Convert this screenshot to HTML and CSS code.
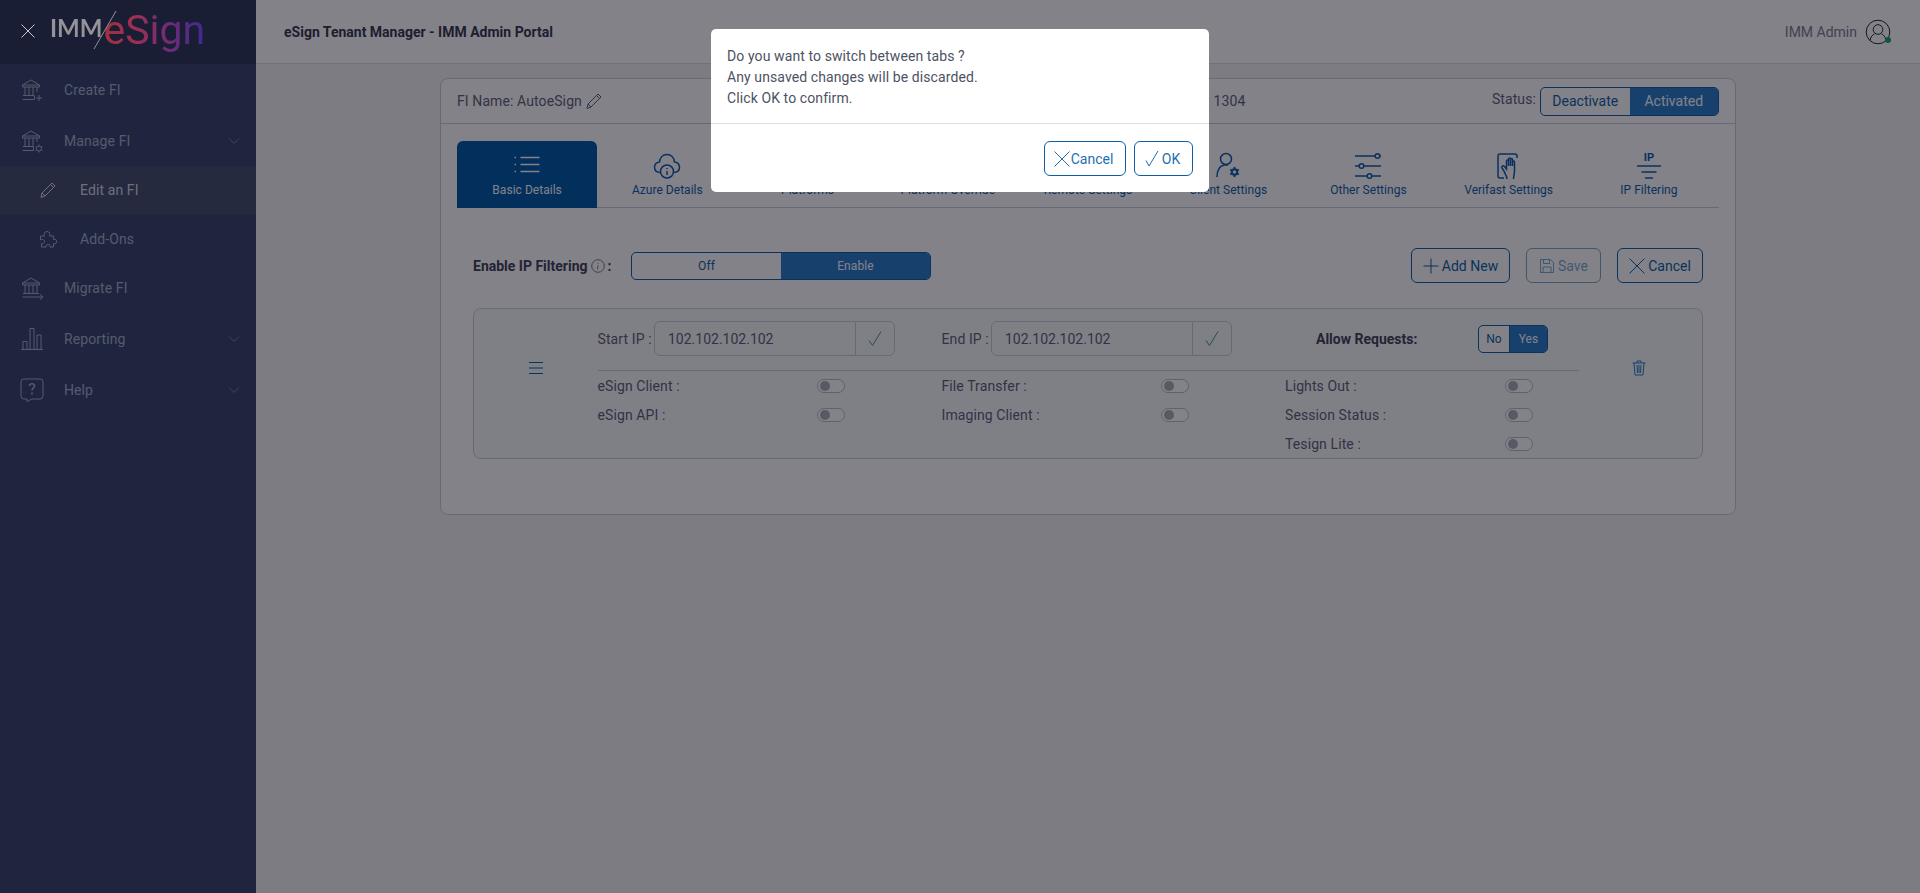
FILE: index.html
```html
<!DOCTYPE html>
<html>
<head>
<meta http-equiv="Content-Type" content="text/html; charset=utf-8"/>
<title>eSign Tenant Manager - IMM Admin Portal</title>
<link rel="stylesheet" href="styles.css">
</head>
<body>

<div class="app">
  <aside class="side">
    <div class="side-top">
      <svg class="ico close-x above" width="16" height="16" viewBox="0 0 16 16"><path d="M1.500 1.500l13 13M14.500 1.500l-13 13"/></svg>
      <div class="logo above">
        <span class="logo-imm">IMM</span>
        <svg class="logo-slash" width="24" height="38" viewBox="0 0 24 38"><path d="M23 0L1 38"/></svg>
        <span class="logo-esign">eSign</span>
      </div>
    </div>

    <nav class="menu">
      <a class="menu-item">
        <svg class="ico menu-ico" width="24" height="24" viewBox="0 0 24 24"><path d="M2.500 7L11 2l8.500 5zM2.500 7v2h17V7M5 9v8.500M9 9v8.500M13 9v8.500M17 9v5M3 17.500h11M2.500 21.500h12v-4M19 17v6M16 20h6"/></svg>
        <span>Create FI</span>
      </a>
      <a class="menu-item">
        <svg class="ico menu-ico" width="24" height="24" viewBox="0 0 24 24"><path d="M2.500 7L11 2l8.500 5zM2.500 7v2h17V7M5 9v8.500M9 9v8.500M13 9v8.500M17 9v4M3 17.500h10M2.500 21.500h11v-4"/><circle cx="19" cy="19.500" r="2.500"/><path d="M19 15.500v1.500M19 22v1.500M15.500 17.500l1.300.8M21.200 20.700l1.300.8M15.500 21.500l1.300-.8M21.200 18.300l1.300-.8"/></svg>
        <span>Manage FI</span>
        <svg class="ico chev" width="12" height="8" viewBox="0 0 12 8"><path d="M1 1.500l5 5 5-5"/></svg>
      </a>
      <div class="sub-current">
        <a class="menu-item sub">
          <svg class="ico menu-ico" width="18" height="18" viewBox="0 0 18 18"><path d="M2 16.500l1-4.500L13 2l3 3L6 15zM3 12l3 3M11.500 3.500l3 3"/></svg>
          <span>Edit an FI</span>
        </a>
      </div>
      <a class="menu-item sub addons">
        <svg class="ico menu-ico" width="18" height="18" viewBox="0 0 18 18"><path d="M1.500 6h4c-1-2 0-4.500 2.500-4.500S11.500 4 10.500 6h4v3.500c2-.8 3.500.3 3 2.500s-2 2-3 1.500V17h-3.500c.5-1.500-.5-2.500-2-2.500s-2.500 1-2 2.500H2.500v-3.500c1.500.5 3-.5 3-2s-2-3-4-1.500z"/></svg>
        <span>Add-Ons</span>
      </a>
      <a class="menu-item">
        <svg class="ico menu-ico" width="24" height="24" viewBox="0 0 24 24"><path d="M2.500 7L11 2l8.500 5zM2.500 7v2h17V7M5 9v8M9 9v8M13 9v8M17 9v8M3 17.500h16M2.500 21h20M20 18.500l3 2.500-3 2.500"/></svg>
        <span>Migrate FI</span>
      </a>
      <a class="menu-item">
        <svg class="ico menu-ico" width="24" height="24" viewBox="0 0 24 24"><path d="M1 22.500h22M3 22.500v-8h4v8M10 22.500V1.500h4v21M17 22.500V8h4v14.500"/></svg>
        <span>Reporting</span>
        <svg class="ico chev" width="12" height="8" viewBox="0 0 12 8"><path d="M1 1.500l5 5 5-5"/></svg>
      </a>
      <a class="menu-item">
        <svg class="ico menu-ico" width="24" height="24" viewBox="0 0 24 24"><path d="M4 1h16a3 3 0 0 1 3 3v14a3 3 0 0 1-3 3h-8l-5 2.500V21H4a3 3 0 0 1-3-3V4a3 3 0 0 1 3-3z"/><path class="help-mark" d="M9.500 8c0-3 5-3 5 0 0 2-2.500 2-2.500 4.500M12 14.500v2"/></svg>
        <span>Help</span>
        <svg class="ico chev" width="12" height="8" viewBox="0 0 12 8"><path d="M1 1.500l5 5 5-5"/></svg>
      </a>
    </nav>
  </aside>

  <div class="main">
    <header class="topbar">
      <div class="page-title">eSign Tenant Manager - IMM Admin Portal</div>
      <div class="user">
        <span>IMM Admin</span>
        <span class="avatar">
          <svg class="ico" width="26" height="26" viewBox="0 0 26 26"><circle cx="13" cy="13" r="11.800"/><circle cx="13" cy="10.500" r="4.800"/><path d="M5 21.500c.5-4 3-6 4.500-6.500M21 21.500c-.5-4-3-6-4.500-6.500"/></svg>
          <i class="online"></i>
        </span>
      </div>
    </header>

    <section class="card">
      <div class="card-head">
        <div class="fi-name">FI Name: AutoeSign
          <svg class="ico" width="18" height="18" viewBox="0 0 18 18"><path d="M2 16.500l1-4.500L13 2l3 3L6 15zM3 12l3 3M11.500 3.500l3 3"/></svg>
        </div>
        <div class="fi-id">FI ID: 1304</div>
        <div class="status">
          <span class="status-label">Status:</span>
          <div class="seg seg-status">
            <button class="seg-btn">Deactivate</button>
            <button class="seg-btn on">Activated</button>
          </div>
        </div>
      </div>

      <div class="tabs">
        <div class="tab active">
          <svg class="ico thick" width="30" height="30" viewBox="0 0 30 30"><path d="M8.500 6.500h19M8.500 13.500h19M8.500 20.500h19M2.500 6.500H4M2.500 13.500H4M2.500 20.500H4"/></svg>
          <span>Basic Details</span>
        </div>
        <div class="tab">
          <svg class="ico thick" width="30" height="30" viewBox="0 0 30 30"><path d="M8.500 21.500C4.500 21.500 2.500 19 2.500 16s2.500-5 5-5C8 6.500 11 3.500 15 3.500s7 3 7.500 7.500c2.500 0 5 2 5 5s-2 5.500-6 5.500"/><circle cx="15" cy="20.500" r="6.500"/><path d="M15 20v4M15 17v1"/></svg>
          <span>Azure Details</span>
        </div>
        <div class="tab"><span class="icon-gap"></span><span>Platforms</span></div>
        <div class="tab"><span class="icon-gap"></span><span>Platform Override</span></div>
        <div class="tab"><span class="icon-gap"></span><span>Remote Settings</span></div>
        <div class="tab">
          <svg class="ico thick" width="30" height="30" viewBox="0 0 30 30"><circle cx="13" cy="8" r="5.500"/><path d="M4 26c0-7 3-11 7-12h4"/><circle cx="21.500" cy="21" r="2.700" stroke-width="2"/><path d="M21.500 16v2M21.500 24v2M17.200 18.500l1.700 1M24.100 22.500l1.700 1M17.200 23.500l1.700-1M24.100 19.500l1.700-1" stroke-width="1.800"/></svg>
          <span>Client Settings</span>
        </div>
        <div class="tab">
          <svg class="ico thick" width="30" height="30" viewBox="0 0 30 30"><path d="M2 5h20M27 5h1M2 15h4M11 15h17M2 25h12M19 25h9"/><circle cx="24.500" cy="5" r="2.300"/><circle cx="8.500" cy="15" r="2.300"/><circle cx="16.500" cy="25" r="2.300"/></svg>
          <span>Other Settings</span>
        </div>
        <div class="tab">
          <svg class="ico thick" width="30" height="30" viewBox="0 0 30 30"><path d="M21 3H6a2 2 0 0 0-2 2v20a2 2 0 0 0 2 2h4M21 3a2 2 0 0 1 2 2v2M10 20l-2-3c-1-1.500 1-3 2.500-1.500l2 2.500V10c0-1.500 2-1.500 2 0v5V8c0-1.500 2-1.500 2 0v7V8.500c0-1.500 2-1.500 2 0V15v-4c0-1.500 2-1.500 2 0v9c0 3-1 5-1 8M10 20c1 3 3 5 3 8"/></svg>
          <span>Verifast Settings</span>
        </div>
        <div class="tab">
          <svg class="ico thick" width="30" height="30" viewBox="0 0 30 30"><text class="ip-glyph" x="15" y="10" text-anchor="middle">IP</text><path d="M3 15h24M7.500 21h15M11 27h8"/></svg>
          <span>IP Filtering</span>
        </div>
      </div>

      <div class="tools">
        <div class="filter-label">Enable IP Filtering
          <svg class="ico info" width="14" height="14" viewBox="0 0 14 14"><circle cx="7" cy="7" r="6.300"/><path d="M7 6.300l-.5 4M7 3.800v1"/></svg>
          <span class="colon">:</span>
        </div>
        <div class="seg seg-filter">
          <button class="seg-btn">Off</button>
          <button class="seg-btn on">Enable</button>
        </div>
        <div class="actions">
          <button class="btn btn-add">
            <svg class="ico" width="16" height="16" viewBox="0 0 16 16"><path d="M8 .500v15M.500 8h15"/></svg>Add New
          </button>
          <button class="btn btn-save">
            <svg class="ico" width="16" height="16" viewBox="0 0 16 16"><path d="M1.500 1.500h10l3 3v10h-13zM4.500 1.500v4h6v-4M4 14.500V9h8v5.500"/></svg>Save
          </button>
          <button class="btn btn-cancel">
            <svg class="ico" width="16" height="16" viewBox="0 0 16 16"><path d="M.500 .500l15 15M15.500 .500l-15 15"/></svg>Cancel
          </button>
        </div>
      </div>

      <div class="ip-row">
        <div class="drag">
          <svg class="ico" width="16" height="12" viewBox="0 0 16 12"><path d="M1 .500h14M1 6h14M1 11.500h14"/></svg>
        </div>
        <div class="ip-body">
          <div class="ip-top">
            <div class="ip-cell">
              <label class="ip-label start">Start IP :</label>
              <div class="ip-group">
                <input class="ip-input" value="102.102.102.102">
                <span class="ip-ok"><svg class="ico" width="16" height="18" viewBox="0 0 16 18"><path d="M2 10.500l3.500 5L14 1.500"/></svg></span>
              </div>
            </div>
            <div class="ip-cell">
              <label class="ip-label end">End IP :</label>
              <div class="ip-group">
                <input class="ip-input" value="102.102.102.102">
                <span class="ip-ok"><svg class="ico" width="16" height="18" viewBox="0 0 16 18"><path d="M2 10.500l3.500 5L14 1.500"/></svg></span>
              </div>
            </div>
            <div class="ip-cell allow">
              <span class="allow-label">Allow Requests:</span>
              <div class="seg seg-allow">
                <button class="seg-btn">No</button>
                <button class="seg-btn on">Yes</button>
              </div>
            </div>
          </div>
          <div class="switches">
            <div class="sw-col">
              <div class="sw-row"><span>eSign Client :</span><i class="switch"></i></div>
              <div class="sw-row"><span>eSign API :</span><i class="switch"></i></div>
            </div>
            <div class="sw-col">
              <div class="sw-row"><span>File Transfer :</span><i class="switch"></i></div>
              <div class="sw-row"><span>Imaging Client :</span><i class="switch"></i></div>
            </div>
            <div class="sw-col">
              <div class="sw-row"><span>Lights Out :</span><i class="switch"></i></div>
              <div class="sw-row"><span>Session Status :</span><i class="switch"></i></div>
              <div class="sw-row"><span>Tesign Lite :</span><i class="switch"></i></div>
            </div>
          </div>
        </div>
        <div class="trash">
          <svg class="ico" width="14" height="16" viewBox="0 0 14 16"><path d="M.500 3h13M5 3V1h4v2M2 3l1 12h8l1-12M5 5l.5 8M7 5v8M9 5l-.5 8"/></svg>
        </div>
      </div>
    </section>
  </div>
</div>

<div class="overlay">
  <div class="dialog">
    <div class="dialog-text">
      <p>Do you want to switch between tabs ?</p>
      <p>Any unsaved changes will be discarded.</p>
      <p>Click OK to confirm.</p>
    </div>
    <div class="dialog-foot">
      <button class="btn dlg-btn dlg-cancel">
        <svg class="ico" width="16" height="16" viewBox="0 0 16 16"><path d="M.500 .500l15 15M15.500 .500l-15 15"/></svg>Cancel
      </button>
      <button class="btn dlg-btn dlg-ok">
        <svg class="ico" width="14" height="17" viewBox="0 0 14 17"><path d="M1 10.500l3 5.500L13 1"/></svg>OK
      </button>
    </div>
  </div>
</div>

</body>
</html>
```

FILE: styles.css
```css
* {
  box-sizing: border-box;
}

html, body {
  height: 100%;
}

body {
  margin: 0;
  overflow: hidden;
  font-family: Roboto, sans-serif;
  font-size: 14px;
  letter-spacing: .1px;
  color: #5f5f7b;
  background-color: #f3f3f3;
}

button, input {
  font-family: inherit;
  letter-spacing: inherit;
}

.ico {
  fill: none;
  stroke: currentColor;
  stroke-width: 1;
  flex: none;
}

.ico.thick {
  stroke-width: 1.5;
}

.app {
  display: flex;
  height: 100vh;
}

/* sidebar */
.side {
  width: 256px;
  flex: none;
  background-color: #39456b;
  color: #a5afc8;
}

.side-top {
  height: 64px;
  display: flex;
  align-items: center;
  padding-left: 20px;
  background-color: #2d3658;
}

.above {
  position: relative;
  z-index: 60;
}

.close-x {
  color: #c8c8d2;
  margin-top: -2px;
}

.logo {
  display: flex;
  margin-left: 14px;
  height: 50px;
  margin-top: -4px;
}

.logo-imm {
  font-family: Lato, sans-serif;
  font-weight: 700;
  font-size: 24px;
  line-height: 25px;
  letter-spacing: 0;
  margin-top: 10px;
  color: #939398;
}

.logo-slash {
  position: absolute;
  left: 43px;
  top: 6px;
  stroke: #939398;
  fill: none;
  stroke-width: 1;
}

.logo-esign {
  font-family: Roboto, sans-serif;
  font-weight: 400;
  font-size: 41px;
  line-height: 50px;
  letter-spacing: 0;
  margin-left: 1px;
  background: linear-gradient(90deg, #a3303c 0%, #9c2f58 35%, #6f2b78 65%, #3f2a90 100%);
  -webkit-background-clip: text;
  background-clip: text;
  color: transparent;
}

.menu-item {
  display: flex;
  align-items: center;
  height: 51px;
  padding: 0 16px 0 20px;
  position: relative;
}

.menu-ico {
  width: 24px;
  margin-right: 20px;
}

.help-mark {
  stroke-width: 1.6;
}

.chev {
  margin-left: auto;
  color: #7d869e;
}

.menu-item.sub {
  height: 48px;
  padding-left: 39px;
}

.menu-item.sub .menu-ico {
  width: 18px;
  margin-right: 23px;
}

.sub-current {
  background-color: #454f6b;
  color: #d5d8ea;
}

.menu-item.addons {
  padding-top: 2px;
}

/* top bar */
.main {
  flex: 1;
  min-width: 0;
}

.topbar {
  height: 64px;
  display: flex;
  align-items: center;
  justify-content: space-between;
  padding: 0 29px 0 28px;
  background-color: #fff;
  border-bottom: 1px solid #dcdce4;
}

.page-title {
  font-weight: 700;
  font-size: 14px;
  letter-spacing: 0;
  color: #37374f;
}

.user {
  display: flex;
  align-items: center;
  gap: 8px;
  letter-spacing: 0;
  color: #7c7c92;
}

.avatar {
  position: relative;
  display: flex;
  color: #242436;
}

.online {
  position: absolute;
  right: 0;
  bottom: 2px;
  width: 6px;
  height: 6px;
  border-radius: 50%;
  background-color: #1aa760;
}

/* card */
.card {
  width: 1296px;
  height: 437px;
  margin: 14px auto 0;
  background-color: #fff;
  border: 1px solid #cdcddb;
  border-radius: 8px;
}

.card-head {
  height: 45px;
  display: grid;
  grid-template-columns: 721px 1fr auto;
  align-items: center;
  padding: 0 16px;
  border-bottom: 1px solid #cdcddb;
}

.fi-name {
  display: flex;
  align-items: center;
  gap: 3px;
}

.status {
  display: flex;
  align-items: center;
  gap: 4px;
}

.status-label {
  margin-top: -4px;
}

.tabs {
  display: grid;
  grid-template-columns: repeat(9, 1fr);
  height: 67px;
  margin: 17px 16px 0;
  border-bottom: 1px solid #cdcddb;
}

.tab {
  display: flex;
  flex-direction: column;
  align-items: center;
  padding-top: 10px;
  font-size: 12px;
  letter-spacing: .03px;
  color: #0f5cab;
}

.tab span:last-child {
  margin-top: 2px;
}

.tab.active {
  margin-bottom: -1px;
  background-color: #0059a8;
  border-radius: 6px 6px 0 0;
  color: #fff;
}

.icon-gap {
  height: 30px;
}

.ip-glyph {
  font-size: 11px;
  font-weight: 700;
  fill: currentColor;
  stroke: none;
}

/* filter row */
.tools {
  display: flex;
  align-items: center;
  height: 35px;
  margin: 40px 32px 0;
}

.filter-label {
  display: flex;
  align-items: center;
  width: 158px;
  font-weight: 700;
  letter-spacing: 0;
  color: #414159;
}

.info {
  margin-left: 3px;
  color: #7a7a92;
}

.colon {
  margin-left: 3px;
}

.seg {
  display: flex;
  overflow: hidden;
  border: 1px solid #0f5fa6;
  border-radius: 5px;
  background-color: #fff;
}

.seg-btn {
  flex: 1;
  padding: 0;
  border: 0;
  background: transparent;
  color: #0f5fa6;
}

.seg-btn.on {
  background-color: #2b7bc7;
  color: #fff;
}

.seg-filter {
  width: 300px;
  height: 28px;
}

.seg-filter .seg-btn {
  font-size: 12px;
}

.seg-status {
  width: 179px;
  height: 29px;
}

.seg-status .seg-btn {
  font-size: 14px;
  letter-spacing: 0;
}

.seg-allow {
  width: 70px;
  height: 28px;
}

.seg-allow .seg-btn {
  font-size: 12px;
}

.seg-allow .seg-btn:first-child {
  flex: 0 0 31px;
  border-right: 1px solid #0f5fa6;
}

.actions {
  display: flex;
  gap: 16px;
  margin-left: auto;
}

.btn {
  display: flex;
  align-items: center;
  justify-content: center;
  height: 35px;
  padding: 0;
  border: 1px solid #0f5fa6;
  border-radius: 6px;
  background-color: #fff;
  color: #0f5fa6;
  font-size: 14px;
  letter-spacing: 0;
}

.btn .ico {
  margin-right: 3px;
}

.btn-add {
  width: 99px;
}

.btn-save {
  width: 75px;
  opacity: .55;
}

.btn-cancel {
  width: 86px;
}

/* ip entry */
.ip-row {
  display: flex;
  height: 151px;
  margin: 25px 32px 0;
  background-color: #f9f9fa;
  border: 1px solid #cdcddb;
  border-radius: 8px;
}

.drag {
  width: 123.500px;
  flex: none;
  padding-top: 52px;
  text-align: center;
  color: #0f5fa6;
}

.ip-body {
  width: 981.500px;
  flex: none;
  padding-top: 12px;
}

.ip-top {
  display: grid;
  grid-template-columns: 344px 343.500px 1fr;
  height: 50px;
  padding-bottom: 15px;
  border-bottom: 1px solid #cdcddb;
}

.ip-cell {
  display: flex;
  align-items: center;
}

.ip-label {
  flex: none;
}

.ip-label.start {
  width: 56.500px;
}

.ip-label.end {
  width: 49.500px;
}

.ip-group {
  display: flex;
  width: 241px;
  height: 35px;
  border: 1px solid #cdcddb;
  border-radius: 6px;
}

.ip-input {
  width: 200px;
  padding: 0 0 0 13px;
  border: 0;
  outline: 0;
  background: transparent;
  font-size: 14px;
  letter-spacing: 0;
  color: #5f5f7b;
}

.ip-ok {
  flex: 1;
  display: flex;
  align-items: center;
  justify-content: center;
  border-left: 1px solid #cdcddb;
  color: #4a9480;
}

.allow-label {
  width: 162px;
  margin-left: 31px;
  font-weight: 700;
  letter-spacing: 0;
  color: #414159;
}

.switches {
  display: grid;
  grid-template-columns: 344px 343.500px 1fr;
}

.sw-row {
  display: flex;
  align-items: center;
  height: 29px;
}

.sw-row span {
  width: 219.500px;
}

.sw-col:last-child .sw-row span {
  width: 220px;
}

.switch {
  position: relative;
  width: 28px;
  height: 14px;
  border: 1px solid #bcbcc8;
  border-radius: 7px;
  background-color: #fff;
}

.switch::before {
  content: "";
  position: absolute;
  left: 2px;
  top: 1px;
  width: 10px;
  height: 10px;
  border-radius: 50%;
  background-color: #adadb8;
}

.trash {
  flex: 1;
  padding: 51px 4px 0 0;
  text-align: center;
  color: #2b7bc7;
}

/* confirm dialog */
.overlay {
  position: fixed;
  left: 0;
  top: 0;
  right: 0;
  bottom: 0;
  z-index: 50;
  display: flex;
  justify-content: center;
  align-items: flex-start;
  padding-top: 29px;
  background-color: rgba(5, 5, 18, .5);
}

.dialog {
  width: 498px;
  height: 163px;
  background-color: #fff;
  border-radius: 5px;
  position: relative;
  z-index: 70;
}

.dialog-text {
  height: 95px;
  padding: 17px 16px 0;
  border-bottom: 1px solid #dcdce2;
  line-height: 21px;
  color: #4d5264;
}

.dialog-text p {
  margin: 0;
}

.dialog-foot {
  display: flex;
  justify-content: flex-end;
  gap: 8px;
  padding: 17px 16px 0;
}

.dlg-btn {
  color: #1f6fb0;
}

.dlg-cancel {
  width: 82px;
  padding-right: 3px;
}

.dlg-cancel .ico {
  margin-right: 1px;
}

.dlg-ok {
  width: 59px;
  padding-right: 2px;
}
```
